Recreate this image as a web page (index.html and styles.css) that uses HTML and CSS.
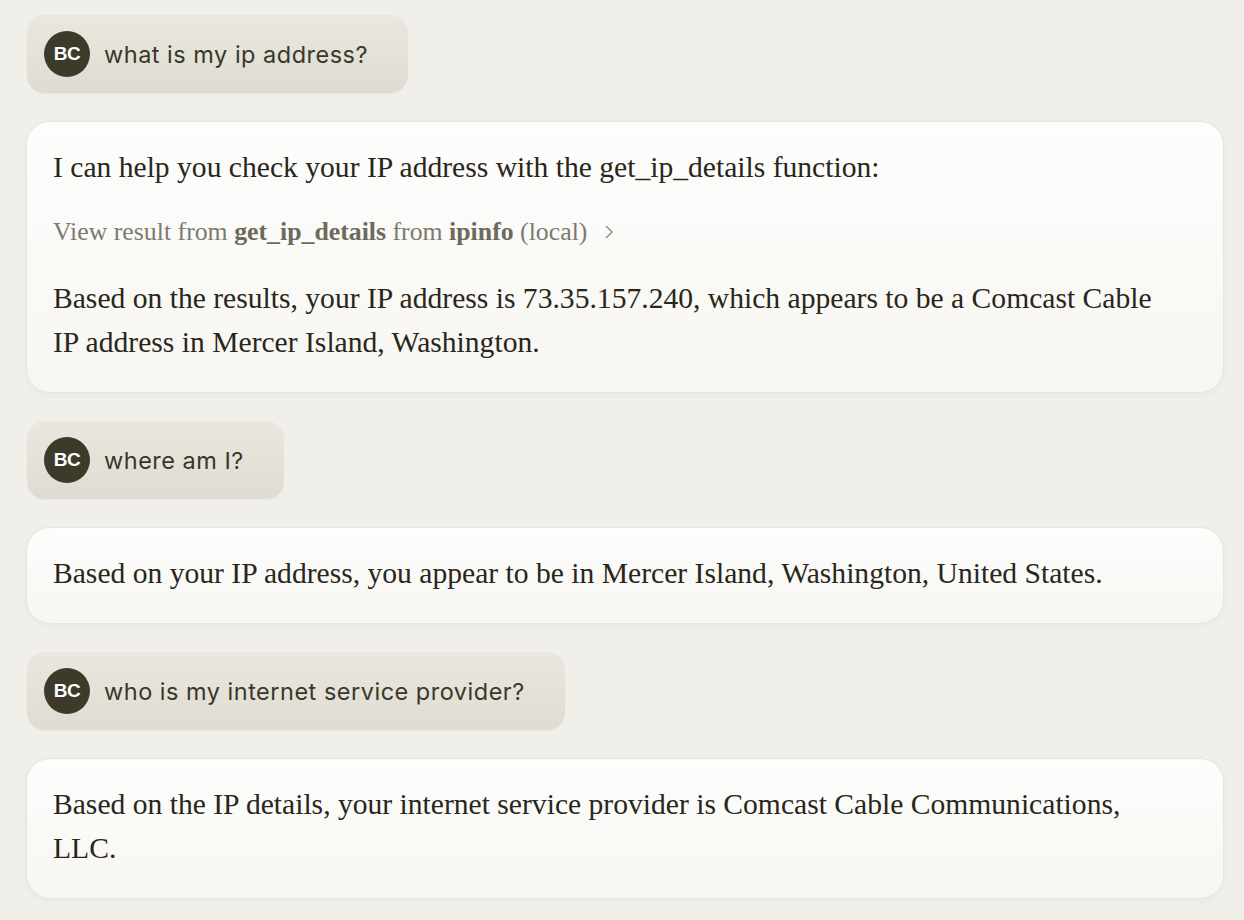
FILE: index.html
```html
<!DOCTYPE html>
<html lang="en">
<head>
<meta charset="utf-8">
<title>Chat</title>
<link rel="stylesheet" href="styles.css">
</head>
<body>
<main class="thread">
  <div class="user-msg">
    <span class="avatar">BC</span>
    <span class="user-text">what is my ip address?</span>
  </div>
  <div class="reply">
    <p class="para">I can help you check your IP address with the get_ip_details function:</p>
    <div class="tool-row">
      <span>View result from <b>get_ip_details</b> from <b>ipinfo</b> (local)</span>
      <svg class="chev" width="10" height="14" viewBox="0 0 10 14" aria-hidden="true"><path d="M2.5 1.5 L8 7 L2.5 12.5" fill="none" stroke="currentColor" stroke-width="1.3" stroke-linecap="round" stroke-linejoin="round"/></svg>
    </div>
    <p class="para">Based on the results, your IP address is 73.35.157.240, which appears to be a Comcast Cable IP address in Mercer Island, Washington.</p>
  </div>
  <div class="user-msg">
    <span class="avatar">BC</span>
    <span class="user-text">where am I?</span>
  </div>
  <div class="reply">
    <p class="para">Based on your IP address, you appear to be in Mercer Island, Washington, United States.</p>
  </div>
  <div class="user-msg">
    <span class="avatar">BC</span>
    <span class="user-text">who is my internet service provider?</span>
  </div>
  <div class="reply">
    <p class="para">Based on the IP details, your internet service provider is Comcast Cable Communications, LLC.</p>
  </div>
</main>
</body>
</html>
```

FILE: styles.css
```css
html, body {
  margin: 0;
  padding: 0;
}
body {
  background: #f1efea;
  color: #29261b;
  height: 920px;
  overflow: hidden;
}
.thread {
  display: flex;
  flex-direction: column;
  align-items: flex-start;
  gap: 28px;
  padding: 15px 20px 0 26px;
}
.user-msg {
  display: flex;
  align-items: center;
  gap: 14px;
  margin-left: 1px;
  padding: 16px 40px 16px 17px;
  border-radius: 18px;
  background: linear-gradient(180deg, #e9e7df 0%, #dedcd2 100%);
  box-shadow: 0 1px 2px rgba(60, 55, 40, 0.05);
}
.avatar {
  width: 46px;
  height: 46px;
  border-radius: 50%;
  background: #3d3a2a;
  color: #ffffff;
  display: flex;
  align-items: center;
  justify-content: center;
  font-family: "Liberation Sans", Arial, sans-serif;
  font-weight: 700;
  font-size: 19px;
  letter-spacing: -0.5px;
}
.user-text {
  font-family: Inter, "Noto Sans", sans-serif;
  font-size: 23.5px;
  color: #3a3729;
  letter-spacing: 0.5px;
}
.reply {
  align-self: stretch;
  box-sizing: border-box;
  padding: 23px 70px 28px 26px;
  border-radius: 24px;
  border: 1px solid #e6e4dd;
  background: linear-gradient(180deg, #fdfdfc 0%, #f7f6f2 100%);
  box-shadow: 0 2px 6px rgba(60, 55, 40, 0.04);
  font-family: "Liberation Serif", "Times New Roman", serif;
}
.para {
  margin: 0;
  font-size: 29.6px;
  line-height: 44px;
  color: #29261b;
}
.tool-row {
  display: flex;
  align-items: center;
  gap: 17px;
  margin: 21px 0 22px;
  height: 44px;
  font-size: 25.8px;
  color: #7d7a6e;
}
.tool-row b {
  color: #6d6a5d;
  font-weight: 700;
}
.chev {
  color: #85827a;
}
```
